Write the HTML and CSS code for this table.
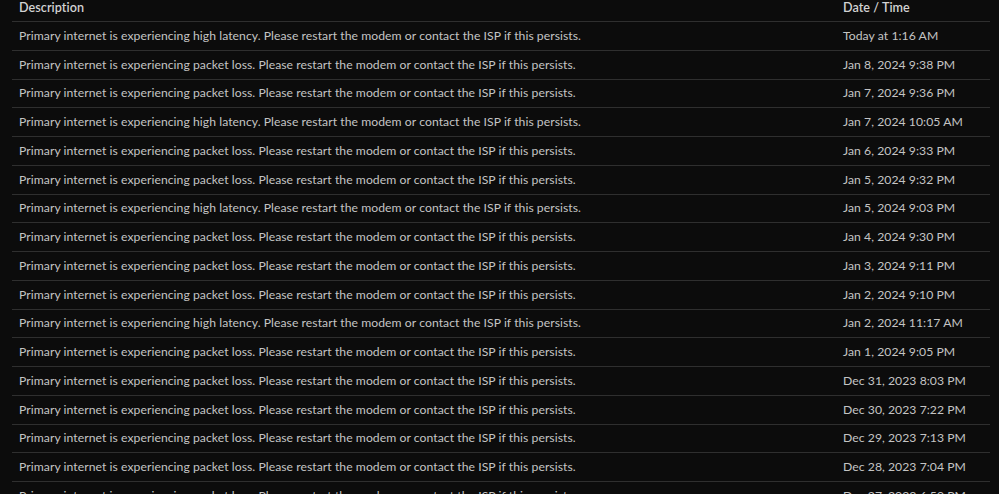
FILE: index.html
```html
<!DOCTYPE html>
<html>
<head>
<meta charset="utf-8">
<link rel="stylesheet" href="styles.css">
</head>
<body>
<div class="wrap">
<table class="log">
<thead>
<tr><th class="desc">Description</th><th class="date">Date / Time</th></tr>
</thead>
<tbody>
<tr><td>Primary internet is experiencing high latency. Please restart the modem or contact the ISP if this persists.</td><td>Today at 1:16 AM</td></tr>
<tr><td>Primary internet is experiencing packet loss. Please restart the modem or contact the ISP if this persists.</td><td>Jan 8, 2024 9:38 PM</td></tr>
<tr><td>Primary internet is experiencing packet loss. Please restart the modem or contact the ISP if this persists.</td><td>Jan 7, 2024 9:36 PM</td></tr>
<tr><td>Primary internet is experiencing high latency. Please restart the modem or contact the ISP if this persists.</td><td>Jan 7, 2024 10:05 AM</td></tr>
<tr><td>Primary internet is experiencing packet loss. Please restart the modem or contact the ISP if this persists.</td><td>Jan 6, 2024 9:33 PM</td></tr>
<tr><td>Primary internet is experiencing packet loss. Please restart the modem or contact the ISP if this persists.</td><td>Jan 5, 2024 9:32 PM</td></tr>
<tr><td>Primary internet is experiencing high latency. Please restart the modem or contact the ISP if this persists.</td><td>Jan 5, 2024 9:03 PM</td></tr>
<tr><td>Primary internet is experiencing packet loss. Please restart the modem or contact the ISP if this persists.</td><td>Jan 4, 2024 9:30 PM</td></tr>
<tr><td>Primary internet is experiencing packet loss. Please restart the modem or contact the ISP if this persists.</td><td>Jan 3, 2024 9:11 PM</td></tr>
<tr><td>Primary internet is experiencing packet loss. Please restart the modem or contact the ISP if this persists.</td><td>Jan 2, 2024 9:10 PM</td></tr>
<tr><td>Primary internet is experiencing high latency. Please restart the modem or contact the ISP if this persists.</td><td>Jan 2, 2024 11:17 AM</td></tr>
<tr><td>Primary internet is experiencing packet loss. Please restart the modem or contact the ISP if this persists.</td><td>Jan 1, 2024 9:05 PM</td></tr>
<tr><td>Primary internet is experiencing packet loss. Please restart the modem or contact the ISP if this persists.</td><td>Dec 31, 2023 8:03 PM</td></tr>
<tr><td>Primary internet is experiencing packet loss. Please restart the modem or contact the ISP if this persists.</td><td>Dec 30, 2023 7:22 PM</td></tr>
<tr><td>Primary internet is experiencing packet loss. Please restart the modem or contact the ISP if this persists.</td><td>Dec 29, 2023 7:13 PM</td></tr>
<tr><td>Primary internet is experiencing packet loss. Please restart the modem or contact the ISP if this persists.</td><td>Dec 28, 2023 7:04 PM</td></tr>
<tr><td>Primary internet is experiencing packet loss. Please restart the modem or contact the ISP if this persists.</td><td>Dec 27, 2023 6:59 PM</td></tr>
</tbody>
</table>
</div>
</body>
</html>
```

FILE: styles.css
```css
html, body {
  margin: 0;
  padding: 0;
  background: #0c0c0c;
  overflow: hidden;
}
.wrap {
  padding: 0 9px 0 12px;
}
.log {
  width: 100%;
  border-collapse: collapse;
  font-family: Lato, "Noto Sans", sans-serif;
  font-size: 12.2px;
  letter-spacing: 0.05px;
  color: #c4c4c4;
}
.log th {
  text-align: left;
  font-weight: 600;
  font-size: 12.6px;
  color: #d2d2d2;
  height: 15px;
  line-height: 14px;
  padding: 0 7px 6px;
  vertical-align: bottom;
  border-bottom: 1px solid #2f2f2f;
}
.log th.date {
  width: 140px;
}
.log td {
  height: 27.75px;
  padding: 0 7px;
  line-height: 16px;
  vertical-align: middle;
  border-bottom: 1px solid #2f2f2f;
  white-space: nowrap;
}
```
